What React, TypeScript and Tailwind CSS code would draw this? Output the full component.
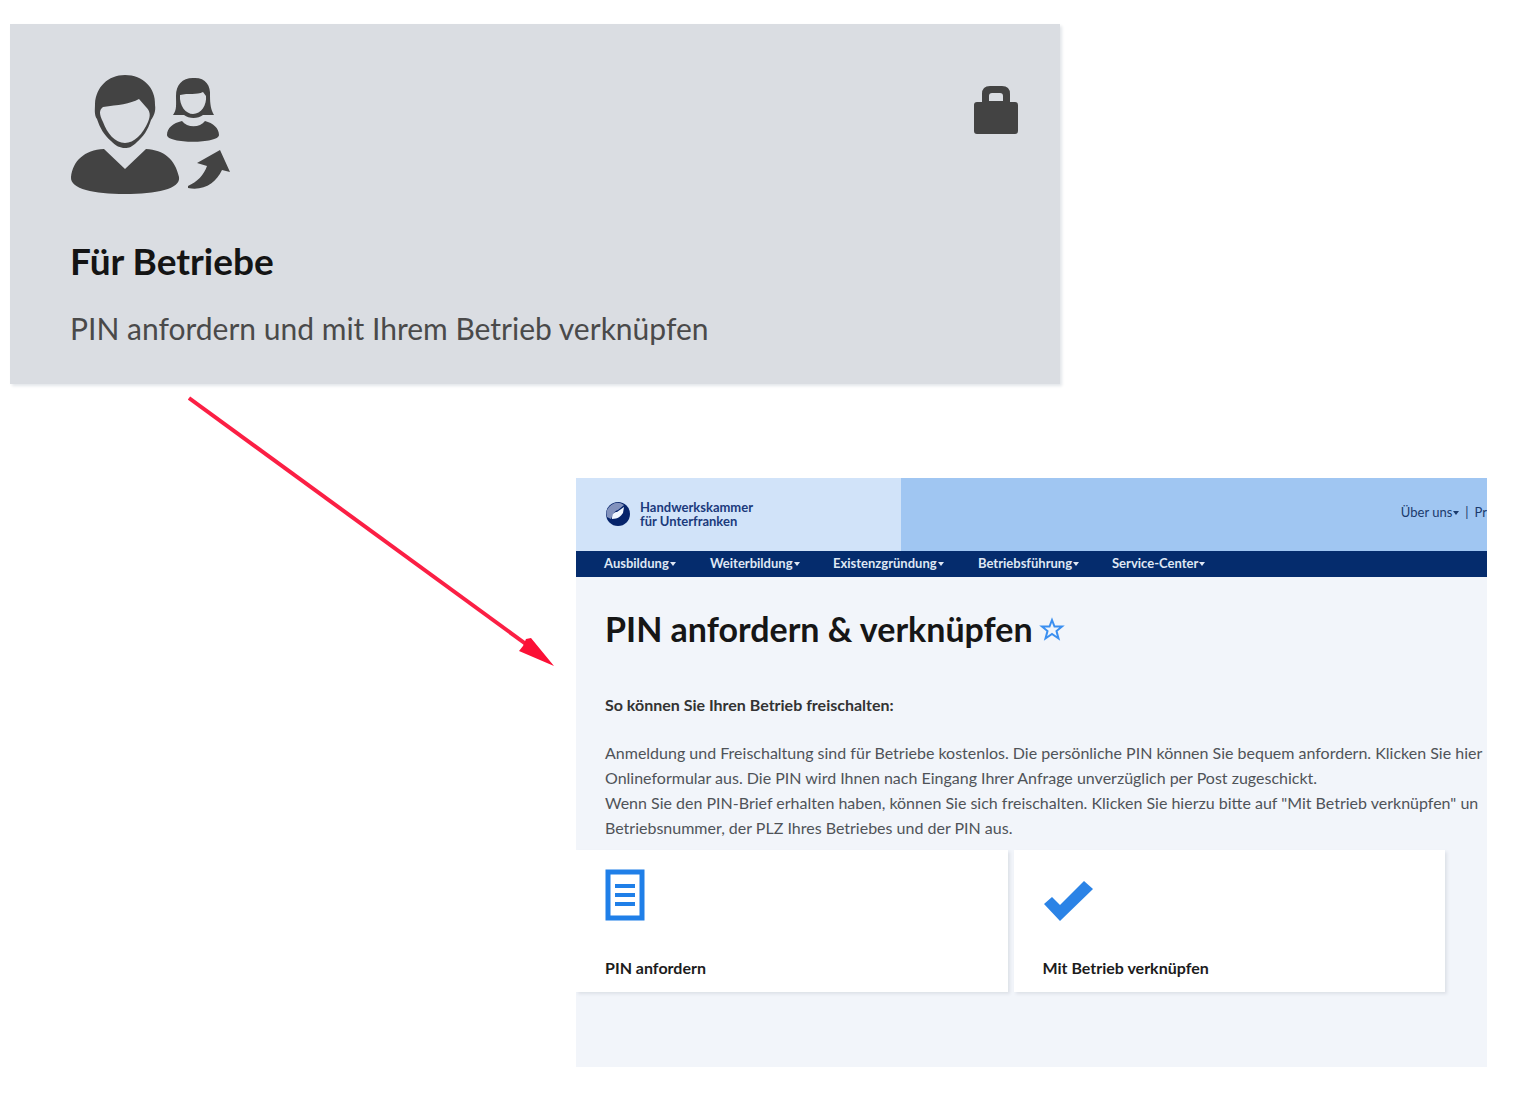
import type { ReactNode } from 'react'

const navItems = [
  { label: 'Ausbildung', width: 'w-[106px]' },
  { label: 'Weiterbildung', width: 'w-[123px]' },
  { label: 'Existenzgründung', width: 'w-[145px]' },
  { label: 'Betriebsführung', width: 'w-[134px]' },
  { label: 'Service-Center', width: 'w-[120px]' },
]

function PeopleIcon() {
  return (
    <svg viewBox="0 0 162 122" className="h-[122px] w-[162px]" fill="#434343" aria-hidden="true">
      {/* large person */}
      <path
        fillRule="evenodd"
        d="M55 2C73 2 86 15 85 32C86 38 84 43 81 47C78 57 73 64 67 69C62 74 59 75 55 75C50 75 46 73 41 68C34 62 30 55 27 46C24 42 25 36 25 31C26 14 38 2 55 2ZM33 34C29 37 29 41 33 49C37 60 45 70 55 70C64 70 73 61 78 49C81 42 80 38 76 34L69 26C60 31 48 32 33 34Z"
      />
      <path d="M34 76L55 96L76 76C94 77 105 86 109 104C111 116 86 121 55 121C24 121 0 116 1 104C3 88 14 77 34 76Z" />
      {/* small person */}
      <path
        fillRule="evenodd"
        d="M123 5C135 4 141 12 140 23C140 31 141 37 144 42H133C128 46 119 46 114 42H103C107 37 106 31 106 23C106 12 112 5 123 5ZM110 22C109 33 116 41 123 41C131 41 137 32 136 23L133 19C127 22 118 20 110 22Z"
      />
      <path d="M112 48C117 55 130 55 135 48C143 50 149 55 149 62C149 71 97 71 97 62C97 55 103 50 112 48Z" />
      {/* arrow */}
      <path d="M118 113C127 109 134 102 137 93L127 90L150 77L160 99L152 97C146 110 134 118 118 115Z" />
    </svg>
  )
}

function LockIcon() {
  return (
    <svg viewBox="0 0 46 50" className="h-[50px] w-[46px]" fill="#434343" aria-hidden="true">
      <path
        fillRule="evenodd"
        d="M9 17V9Q9 1 17 1H29Q37 1 37 9V17H42Q45 17 45 20V46Q45 49 42 49H4Q1 49 1 46V20Q1 17 4 17ZM16 16H30V11Q30 8 27 8H19Q16 8 16 11Z"
      />
    </svg>
  )
}

function PointerArrow() {
  return (
    <svg viewBox="0 0 366 270" className="h-[270px] w-[366px]" aria-hidden="true">
      <path d="M1 2L342 251" stroke="#fb1f44" strokeWidth="4" />
      <path d="M366 270L331 255L335 250L338 243L343 242Z" fill="#fb1036" />
    </svg>
  )
}

function ChamberLogo() {
  return (
    <svg viewBox="0 0 24 24" className="size-6" aria-hidden="true">
      <circle cx="12" cy="12" r="12" fill="#06246b" />
      <path d="M1 15A11 11 0 0 1 18 3L12 8C8 9 7 13 5 17Z" fill="#8292bd" />
      <path d="M6 17C6 12 8 10 11 10L18 5L17 11C15 14 12 17 6 17Z" fill="#f1f7ff" />
    </svg>
  )
}

function StarIcon() {
  return (
    <svg viewBox="0 0 26 26" className="size-[26px]" fill="none" stroke="#3b8ff0" strokeWidth="2" aria-hidden="true">
      <path d="M13 4L15.500 10.500H23L17.500 15L19.500 22.500L13 18L6.500 22.500L8.500 15L3 10.500H10.500Z" />
    </svg>
  )
}

function DocumentIcon() {
  return (
    <svg viewBox="0 0 40 53" className="h-[53px] w-10" fill="none" stroke="#1f7fe8" aria-hidden="true">
      <path d="M3 3H37V49H3Z" strokeWidth="5" />
      <path d="M10 17H30M10 26H30M10 35H30" strokeWidth="4" />
    </svg>
  )
}

function CheckIcon() {
  return (
    <svg viewBox="0 0 50 42" className="h-[42px] w-[50px]" fill="#2b83e6" aria-hidden="true">
      <path d="M1 24L9 17L17 25L41 1L50 9L17 41Z" />
    </svg>
  )
}

function Caret() {
  return (
    <svg viewBox="0 0 6 4" className="h-1 w-[6px]" fill="currentColor" aria-hidden="true">
      <path d="M0 0H6L3 4Z" />
    </svg>
  )
}

function ActionCard({ icon, label }: { icon: ReactNode; label: string }) {
  return (
    <a
      href="#"
      className="flex h-[142px] flex-1 flex-col justify-between bg-white px-[29px] pt-[18px] pb-3 shadow-[2px_2px_3px_#dde1e8]"
    >
      <span className="flex h-[54px] items-end">{icon}</span>
      <span className="text-[16px] leading-6 font-bold whitespace-nowrap text-[#1c1c1c]">{label}</span>
    </a>
  )
}

export default function App() {
  return (
    <main className="min-h-screen overflow-hidden bg-white pt-6 font-['Lato','Open_Sans',sans-serif]">
      <a
        href="#"
        className="mr-[460px] ml-[10px] flex h-[360px] items-start justify-between bg-[#dadde2] pr-[41px] pl-[60px] shadow-[2px_2px_3px_#e3e6ea]"
      >
        <span className="flex flex-col pt-[49px]">
          <PeopleIcon />
          <strong className="mt-11 text-[37px] leading-[44px] font-bold text-[#141414]">Für Betriebe</strong>
          <span className="mt-[25px] text-[30px] leading-10 whitespace-nowrap text-[#4a4a4a]">
            PIN anfordern und mit Ihrem Betrieb verknüpfen
          </span>
        </span>
        <span className="pt-[61px]">
          <LockIcon />
        </span>
      </a>

      <div className="flex">
        <div className="w-[576px] shrink-0 pt-3 pl-[188px]">
          <PointerArrow />
        </div>

        <section className="mt-[94px] mr-[33px] h-[589px] min-w-0 flex-1 overflow-hidden bg-[#f2f5fa]">
          <header className="flex h-[73px]">
            <a href="#" className="flex w-[325px] items-center gap-[10px] bg-[#d1e3f9] pb-[2px] pl-[30px] text-[#1b3a7c]">
              <ChamberLogo />
              <span className="text-[13px] leading-[14px] font-bold">
                Handwerkskammer
                <br />
                für Unterfranken
              </span>
            </a>
            <div className="flex min-w-0 flex-1 items-center justify-end bg-[#a0c6f2] pb-1 text-[13px] whitespace-nowrap text-[#1b3a6c]">
              <a href="#" className="flex items-center gap-px">
                Über uns
                <Caret />
              </a>
              <span className="mx-[6px]">|</span>
              <a href="#">Pr</a>
            </div>
          </header>

          <nav className="flex h-[26px] items-center bg-[#052c6d] pl-7 text-[13px] font-bold text-[#dfe7f4]">
            {navItems.map((item) => (
              <div key={item.label} className={item.width}>
                <a href="#" className="flex items-center gap-px whitespace-nowrap">
                  {item.label}
                  <Caret />
                </a>
              </div>
            ))}
          </nav>

          <div className="pl-[29px] text-[#4f5358]">
            <div className="flex items-center gap-[6px] pt-7">
              <h1 className="text-[34px] leading-[48px] font-bold whitespace-nowrap text-[#161616]">
                PIN anfordern &amp; verknüpfen
              </h1>
              <button type="button" aria-label="Als Favorit merken">
                <StarIcon />
              </button>
            </div>
            <h2 className="mt-10 text-[16px] leading-6 font-bold text-[#333333]">
              So können Sie Ihren Betrieb freischalten:
            </h2>
            <p className="mt-[23px] text-[16px] leading-[25px] whitespace-nowrap">
              Anmeldung und Freischaltung sind für Betriebe kostenlos. Die persönliche PIN können Sie bequem anfordern. Klicken Sie hier
              <br />
              Onlineformular aus. Die PIN wird Ihnen nach Eingang Ihrer Anfrage unverzüglich per Post zugeschickt.
              <br />
              Wenn Sie den PIN-Brief erhalten haben, können Sie sich freischalten. Klicken Sie hierzu bitte auf "Mit Betrieb verknüpfen" un
              <br />
              Betriebsnummer, der PLZ Ihres Betriebes und der PIN aus.
            </p>
          </div>

          <div className="mt-[10px] mr-[42px] flex gap-[6px]">
            <ActionCard icon={<DocumentIcon />} label="PIN anfordern" />
            <ActionCard icon={<CheckIcon />} label="Mit Betrieb verknüpfen" />
          </div>
        </section>
      </div>
    </main>
  )
}
